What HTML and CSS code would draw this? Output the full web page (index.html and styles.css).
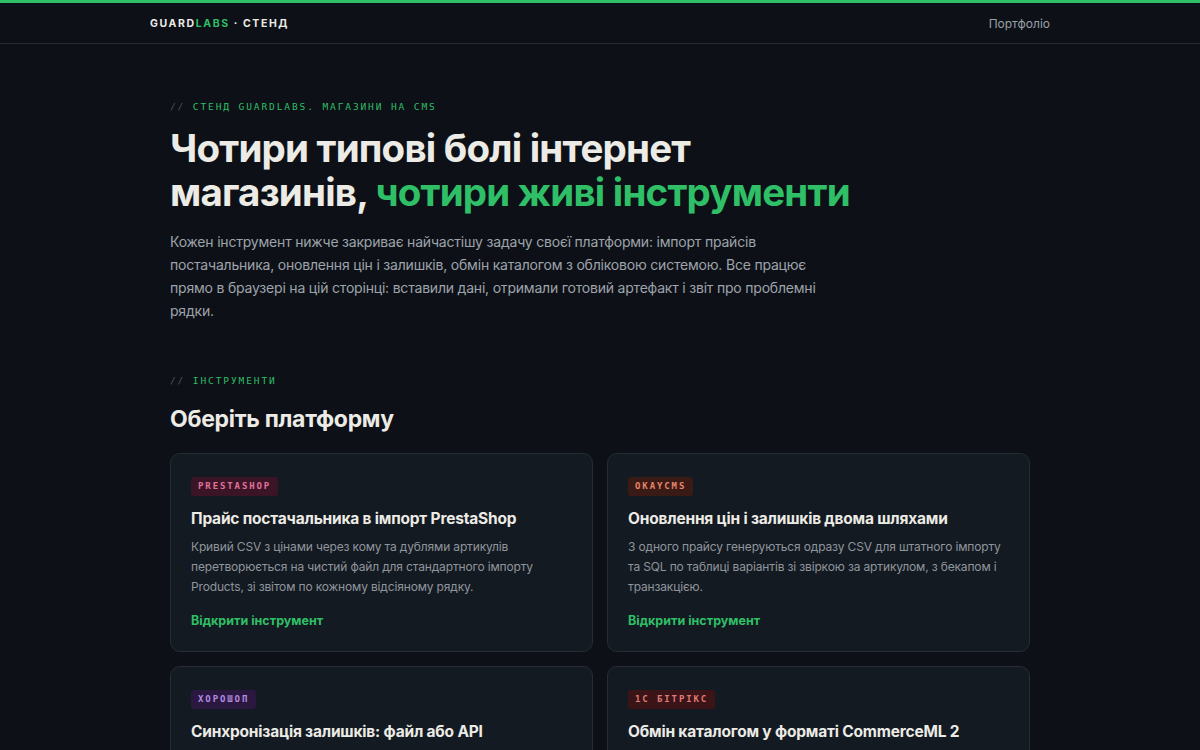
FILE: index.html
```html
<!DOCTYPE html>
<html lang="uk">
<head>
<meta charset="utf-8">
<title>GuardLabs · Стенд</title>
<link rel="stylesheet" href="styles.css">
</head>
<body>
<div class="topline"></div>
<header class="header">
  <div class="header-inner">
    <a class="logo" href="#">GUARD<span class="g">LABS</span> · СТЕНД</a>
    <a class="nav-link" href="#">Портфоліо</a>
  </div>
</header>
<main class="main">
  <section class="hero">
    <div class="eyebrow"><span class="slash">//</span> СТЕНД GUARDLABS. МАГАЗИНИ НА CMS</div>
    <h1 class="title">Чотири типові болі інтернет магазинів, <span class="g">чотири живі інструменти</span></h1>
    <p class="lead">Кожен інструмент нижче закриває найчастішу задачу своєї платформи: імпорт прайсів постачальника, оновлення цін і залишків, обмін каталогом з обліковою системою. Все працює прямо в браузері на цій сторінці: вставили дані, отримали готовий артефакт і звіт про проблемні рядки.</p>
  </section>
  <section class="tools">
    <div class="eyebrow"><span class="slash">//</span> ІНСТРУМЕНТИ</div>
    <h2 class="section-title">Оберіть платформу</h2>
    <div class="grid">
      <article class="card">
        <span class="tag tag-presta">PRESTASHOP</span>
        <h3 class="card-title">Прайс постачальника в імпорт PrestaShop</h3>
        <p class="card-text">Кривий CSV з цінами через кому та дублями артикулів перетворюється на чистий файл для стандартного імпорту Products, зі звітом по кожному відсіяному рядку.</p>
        <a class="card-link" href="#">Відкрити інструмент</a>
      </article>
      <article class="card">
        <span class="tag tag-okay">OKAYCMS</span>
        <h3 class="card-title">Оновлення цін і залишків двома шляхами</h3>
        <p class="card-text">З одного прайсу генеруються одразу CSV для штатного імпорту та SQL по таблиці варіантів зі звіркою за артикулом, з бекапом і транзакцією.</p>
        <a class="card-link" href="#">Відкрити інструмент</a>
      </article>
      <article class="card">
        <span class="tag tag-horo">ХОРОШОП</span>
        <h3 class="card-title">Синхронізація залишків: файл або API</h3>
        <p class="card-text">Залишки зі складу потрапляють у магазин або через файл імпорту, або напряму через API з перевіркою кожної позиції.</p>
        <a class="card-link" href="#">Відкрити інструмент</a>
      </article>
      <article class="card">
        <span class="tag tag-bitrix">1С БІТРІКС</span>
        <h3 class="card-title">Обмін каталогом у форматі CommerceML 2</h3>
        <p class="card-text">Вивантаження з облікової системи перевіряється і збирається у пакет обміну CommerceML 2 для каталогу та пропозицій.</p>
        <a class="card-link" href="#">Відкрити інструмент</a>
      </article>
    </div>
  </section>
</main>
</body>
</html>
```

FILE: styles.css
```css
* { box-sizing: border-box; }
html, body { margin: 0; padding: 0; }
body {
  background: #0d1117;
  color: #e8e6e1;
  font-family: Inter, "Noto Sans", "DejaVu Sans", sans-serif;
}
a { text-decoration: none; }
.g { color: #2fbf67; }

.topline { height: 3px; background: #2fbf67; }

.header { border-bottom: 1px solid #232a33; }
.header-inner {
  width: 900px;
  margin: 0 auto;
  height: 40px;
  display: flex;
  align-items: center;
  justify-content: space-between;
}
.logo {
  color: #ecebe6;
  font-size: 10.5px;
  font-weight: 700;
  letter-spacing: 1.6px;
}
.nav-link {
  color: #9aa0a8;
  font-size: 12px;
}

.main {
  width: 860px;
  margin: 0 auto;
  padding-top: 57px;
}

.eyebrow {
  font-family: "DejaVu Sans Mono", "Liberation Mono", monospace;
  font-size: 9.5px;
  letter-spacing: 1.9px;
  color: #2fbf67;
  line-height: 12px;
}
.slash { color: #4a525c; }

.title {
  margin: 13px 0 0;
  font-size: 38.5px;
  line-height: 44px;
  font-weight: 700;
  letter-spacing: -0.8px;
  color: #ecebe6;
  max-width: 700px;
}
.lead {
  margin: 16px 0 0;
  font-size: 14px;
  line-height: 23px;
  letter-spacing: -0.2px;
  color: #9ea3ab;
  max-width: 660px;
}

.tools { margin-top: 53px; }
.section-title {
  margin: 17px 0 0;
  font-size: 23px;
  line-height: 30px;
  font-weight: 700;
  letter-spacing: -0.3px;
  color: #ecebe6;
}

.grid {
  margin-top: 19px;
  display: grid;
  grid-template-columns: 1fr 1fr;
  gap: 14px;
}
.card {
  background: #141a21;
  border: 1px solid #262d36;
  border-radius: 10px;
  padding: 23px 20px 22px;
  min-height: 199px;
  display: flex;
  flex-direction: column;
  align-items: flex-start;
}
.tag {
  font-family: "DejaVu Sans Mono", "Liberation Mono", monospace;
  font-size: 9px;
  font-weight: 700;
  letter-spacing: 1.9px;
  line-height: 19px;
  padding: 0 7px;
  border-radius: 3px;
}
.tag-presta { background: #3b1526; color: #e0729c; }
.tag-okay { background: #3a1a14; color: #e8856a; }
.tag-horo { background: #2a1840; color: #b48be0; }
.tag-bitrix { background: #3a1416; color: #e07a78; }

.card-title {
  margin: 12px 0 0;
  font-size: 15.5px;
  line-height: 22px;
  font-weight: 700;
  letter-spacing: -0.2px;
  color: #ecebe6;
}
.card-text {
  margin: 7px 0 0;
  font-size: 12px;
  line-height: 20px;
  letter-spacing: -0.15px;
  color: #8f959d;
}
.card-link {
  margin-top: 16px;
  font-size: 12.5px;
  font-weight: 700;
  color: #2fbf67;
}
```
